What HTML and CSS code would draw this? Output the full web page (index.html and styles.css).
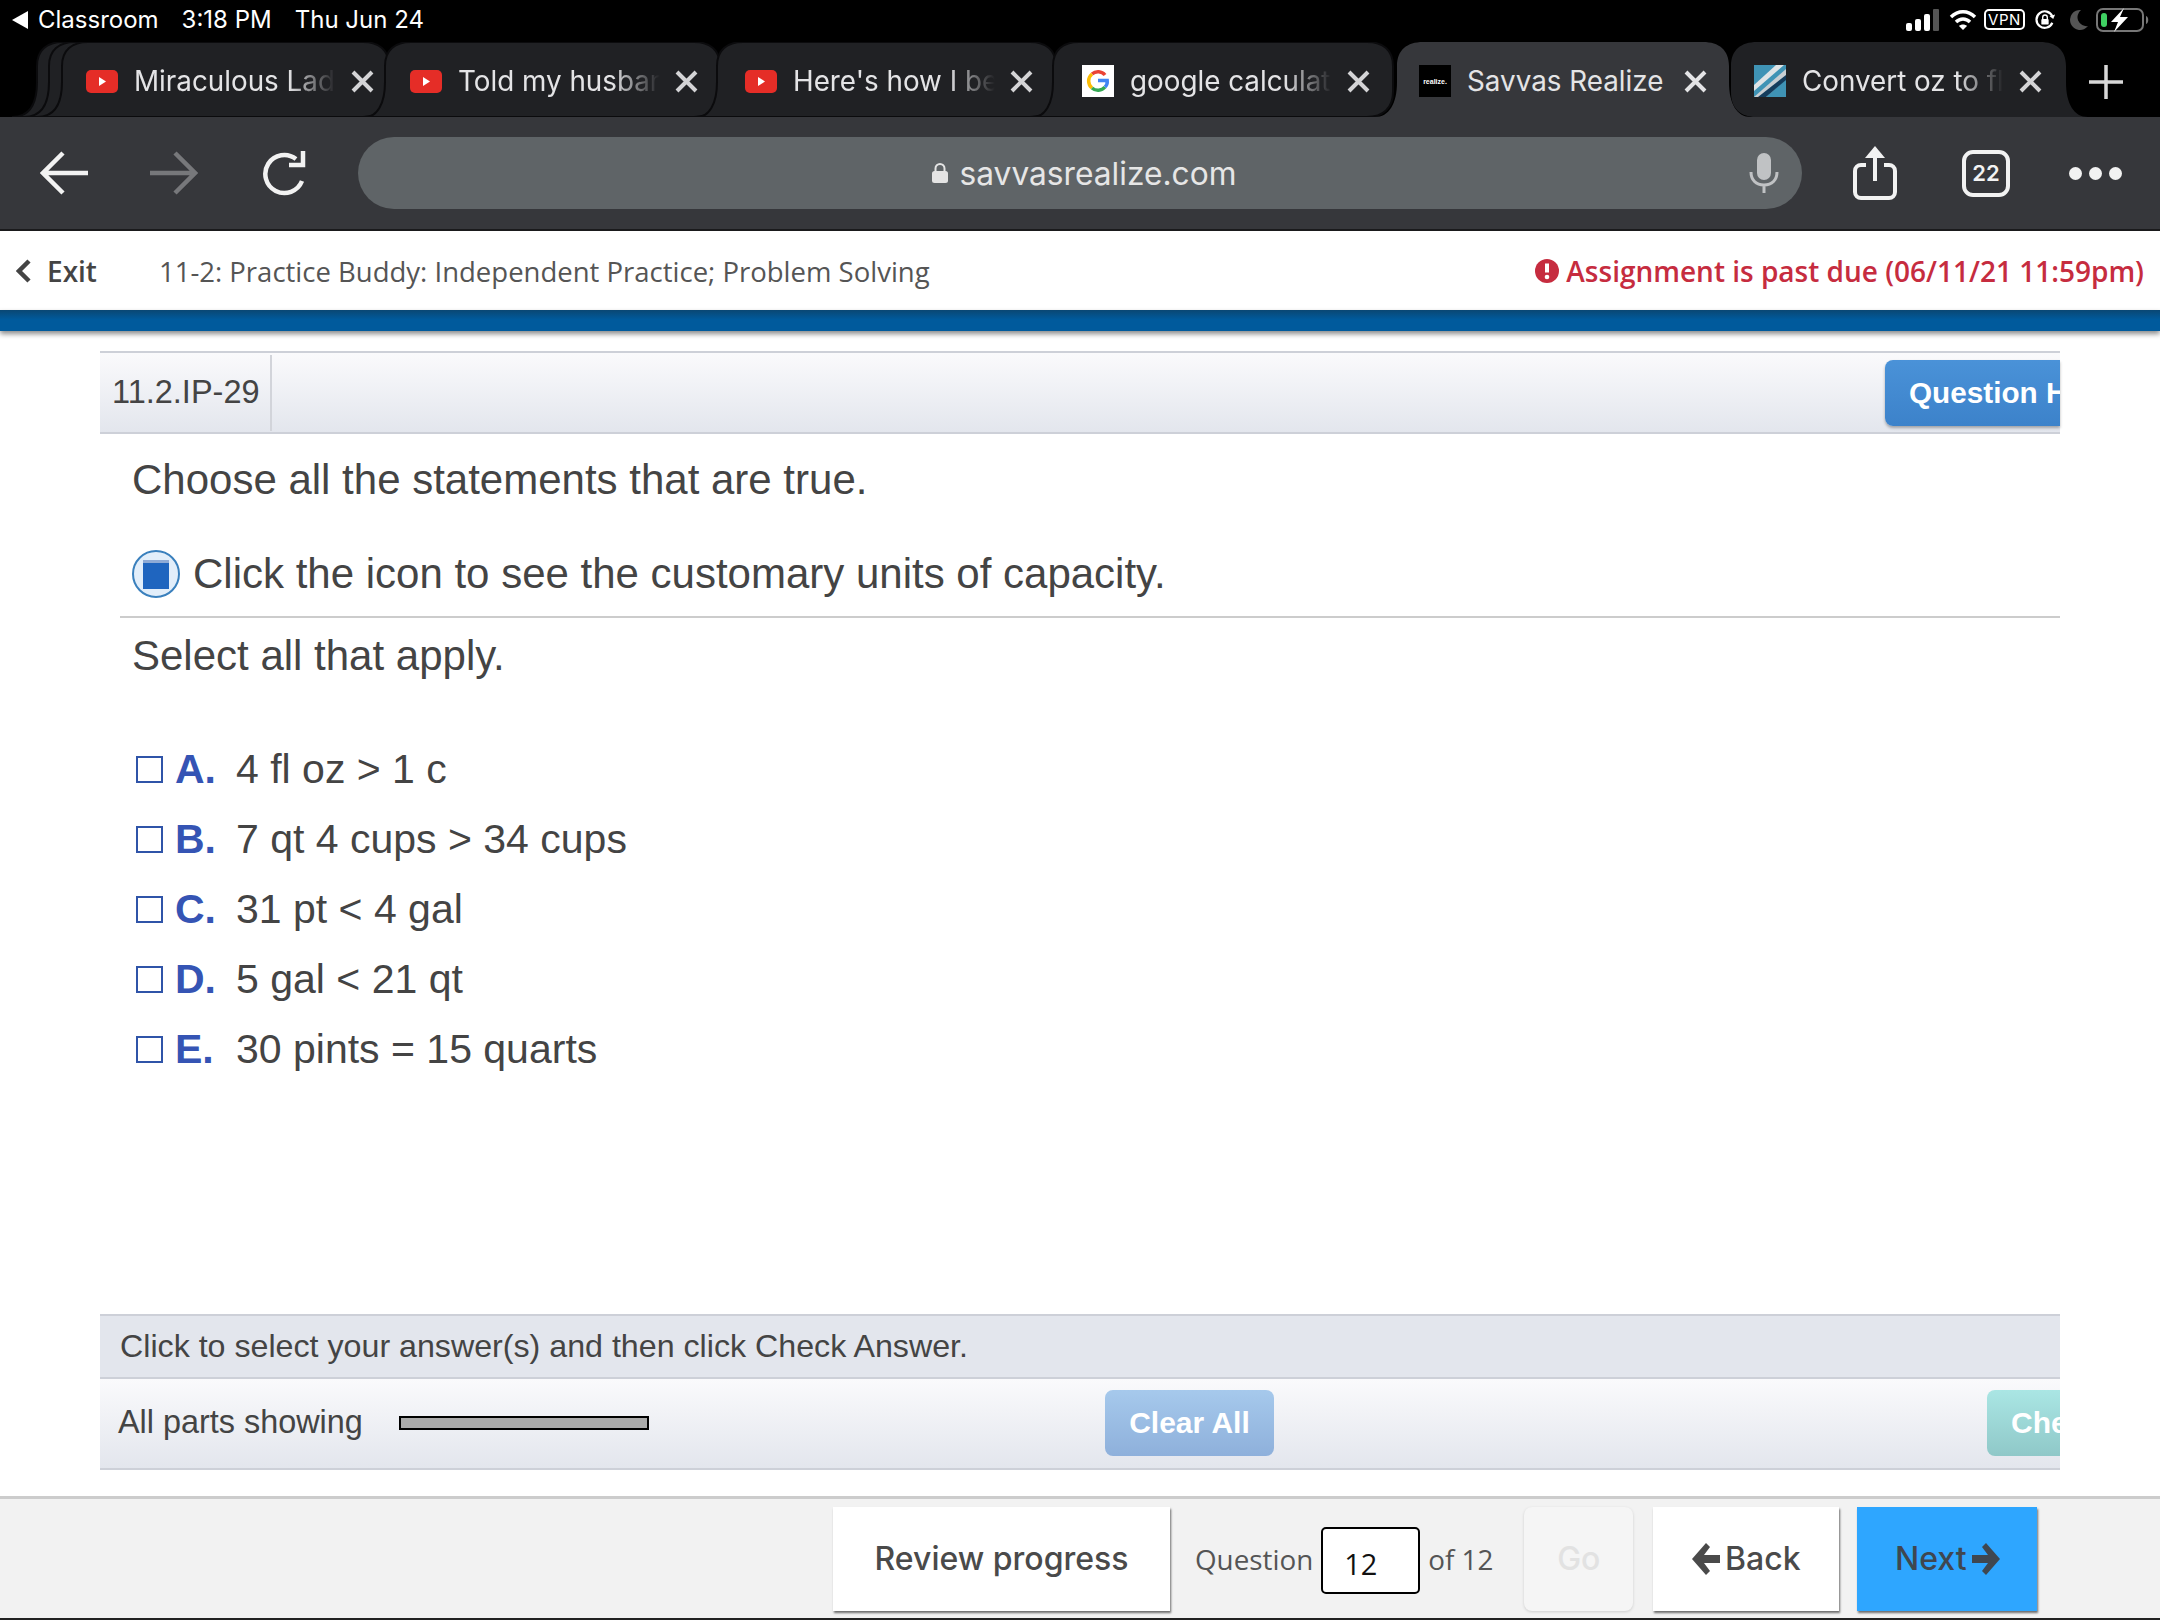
FILE: index.html
```html
<!DOCTYPE html>
<html lang="en">
<head>
<meta charset="utf-8">
<title>Savvas Realize</title>
<link rel="stylesheet" href="styles.css">
</head>
<body>
<div class="status">
  <span class="st-back"></span><span class="st-app">Classroom</span><span class="st-time">3:18 PM</span><span class="st-date">Thu Jun 24</span>
  <div class="st-icons">
    <svg width="33" height="22" viewBox="0 0 33 22"><g fill="#fff"><rect x="0" y="14" width="6" height="8" rx="2"/><rect x="9" y="10" width="6" height="12" rx="2"/><rect x="18" y="5" width="6" height="17" rx="2"/></g><rect x="27" y="0" width="6" height="22" rx="1" fill="#555"/></svg>
    <svg class="st-wifi" width="28" height="22" viewBox="0 0 28 22" fill="none" stroke="#fff" stroke-width="3.4"><path d="M2 8C9 1 19 1 26 8"/><path d="M7 13c4-4 10-4 14 0"/><path d="M14 21l-4-4c2-2 6-2 8 0z" fill="#fff" stroke="none"/></svg>
    <span class="st-vpn">VPN</span>
    <svg class="st-rot" width="22" height="22" viewBox="0 0 24 24" fill="none" stroke="#fff" stroke-width="2.400"><path d="M20 15a9 9 0 1 1 0-7"/><path d="M23 6l-2 5-4-3z" fill="#fff" stroke="none"/><rect x="8" y="11" width="8" height="6" rx="1" fill="#fff" stroke="none"/><path d="M9.500 11V9a2.500 2.500 0 0 1 5 0v2" stroke-width="1.500"/></svg>
    <svg class="st-moon" width="20" height="22" viewBox="0 0 20 22"><path d="M12 1A10 10 0 1 0 19 17 9 9 0 0 1 12 1z" fill="#555"/></svg>
    <svg width="54" height="24" viewBox="0 0 54 24" fill="none"><rect x="1" y="1" width="46" height="22" rx="6" stroke="#777" stroke-width="2"/><rect x="5" y="5" width="6" height="14" rx="3" fill="#3fd062"/><path d="M50 8c3 1 3 7 0 8z" fill="#777"/><path d="M28 0L15 14h7l-4 10 14-15h-8z" fill="#fff"/></svg>
  </div>
</div>

<div class="tabstrip">
  <svg class="tab-art" width="2160" height="75" viewBox="0 0 2160 75">
    <g fill="#202124" stroke="#0b0b0d" stroke-width="2">
      <path d="M12 75C29 75 37 62 37 40V24C37 8 47 0 63 0H200V75Z"/>
      <path d="M24 75C41 75 49 62 49 40V24C49 8 59 0 75 0H200V75Z"/>
      <path d="M37 75C54 75 62 62 62 40V24C62 8 72 0 88 0H363C379 0 389 8 389 24V50C389 66 379 75 363 75Z"/>
      <path d="M365 75C377 75 385 62 385 40V24C385 8 395 0 411 0H694C710 0 720 8 720 24V50C720 66 710 75 694 75Z"/>
      <path d="M697 75C709 75 717 62 717 40V24C717 8 727 0 743 0H1030C1046 0 1056 8 1056 24V50C1056 66 1046 75 1030 75Z"/>
      <path d="M1033 75C1045 75 1053 62 1053 40V24C1053 8 1063 0 1079 0H1367C1383 0 1393 8 1393 24V50C1393 66 1383 75 1367 75Z"/>
    </g>
    <path d="M1375 75C1389 75 1397 62 1397 40V24C1397 8 1407 0 1423 0H1703C1719 0 1729 8 1729 24V40C1729 62 1737 75 1751 75Z" fill="#36373b"/>
    <path d="M1756 75C1740 75 1731 66 1731 50V24C1731 8 1741 0 1757 0H2040C2056 0 2066 8 2066 24V40C2066 62 2074 75 2088 75Z" fill="#202124"/>
  </svg>
  <div class="tab tab-a">
    <svg class="fav" width="32" height="23" viewBox="0 0 32 23"><rect width="32" height="23" rx="5" fill="#e52d27"/><path d="M13 7l7 4.500-7 4.500z" fill="#fff"/></svg>
    <span class="tab-title tab-title-fade">Miraculous Ladybug</span>
    <svg class="tab-x" width="23" height="23" viewBox="0 0 23 23"><path d="M2 2L21 21M21 2L2 21" stroke="#d4d4d6" stroke-width="4"/></svg>
  </div>
  <div class="tab tab-b">
    <svg class="fav" width="32" height="23" viewBox="0 0 32 23"><rect width="32" height="23" rx="5" fill="#e52d27"/><path d="M13 7l7 4.500-7 4.500z" fill="#fff"/></svg>
    <span class="tab-title tab-title-fade">Told my husband</span>
    <svg class="tab-x" width="23" height="23" viewBox="0 0 23 23"><path d="M2 2L21 21M21 2L2 21" stroke="#d4d4d6" stroke-width="4"/></svg>
  </div>
  <div class="tab tab-c">
    <svg class="fav" width="32" height="23" viewBox="0 0 32 23"><rect width="32" height="23" rx="5" fill="#e52d27"/><path d="M13 7l7 4.500-7 4.500z" fill="#fff"/></svg>
    <span class="tab-title tab-title-fade">Here's how I became</span>
    <svg class="tab-x" width="23" height="23" viewBox="0 0 23 23"><path d="M2 2L21 21M21 2L2 21" stroke="#d4d4d6" stroke-width="4"/></svg>
  </div>
  <div class="tab tab-d">
    <svg class="fav" width="32" height="32" viewBox="0 0 32 32"><rect width="32" height="32" fill="#fff"/><path d="M23 10a9 9 0 0 0-13-1" fill="none" stroke="#ea4335" stroke-width="3.500"/><path d="M10 9a9 9 0 0 0 0 14" fill="none" stroke="#fbbc05" stroke-width="3.500"/><path d="M10 23a9 9 0 0 0 13-1" fill="none" stroke="#34a853" stroke-width="3.500"/><path d="M23 22c2-2 2.500-4 2.200-6.500H16" fill="none" stroke="#4285f4" stroke-width="3.500"/></svg>
    <span class="tab-title tab-title-fade">google calculator</span>
    <svg class="tab-x" width="23" height="23" viewBox="0 0 23 23"><path d="M2 2L21 21M21 2L2 21" stroke="#d4d4d6" stroke-width="4"/></svg>
  </div>
  <div class="tab tab-e">
    <span class="fav-black">realize.</span>
    <span class="tab-title">Savvas Realize</span>
    <svg class="tab-x" width="23" height="23" viewBox="0 0 23 23"><path d="M2 2L21 21M21 2L2 21" stroke="#e4e4e6" stroke-width="4"/></svg>
  </div>
  <div class="tab tab-f">
    <svg class="fav" width="32" height="32" viewBox="0 0 32 32"><rect width="32" height="32" fill="#3f93b5"/><path d="M0 32L32 4V14L12 32Z" fill="#c8ced2"/><path d="M4 32L32 10V15L12 32Z" fill="#143c5c"/><path d="M0 20L22 0H30L0 26Z" fill="#dfe4e6"/></svg>
    <span class="tab-title tab-title-fade">Convert oz to fl oz</span>
    <svg class="tab-x" width="23" height="23" viewBox="0 0 23 23"><path d="M2 2L21 21M21 2L2 21" stroke="#d4d4d6" stroke-width="4"/></svg>
  </div>
  <svg class="tab-plus" width="34" height="34" viewBox="0 0 34 34"><path d="M17 0V34M0 17H34" stroke="#d8d8d8" stroke-width="3.500"/></svg>
</div>

<div class="toolbar">
  <svg class="tb-back" width="48" height="44" viewBox="0 0 48 44" fill="none" stroke="#f2f2f2" stroke-width="4.500"><path d="M23 2L3 22l20 20M3 22H48"/></svg>
  <svg class="tb-fwd" width="48" height="44" viewBox="0 0 48 44" fill="none" stroke="#77787b" stroke-width="4.500"><path d="M25 2l20 20-20 20M45 22H0"/></svg>
  <svg class="tb-reload" width="46" height="46" viewBox="0 0 46 46" fill="none" stroke="#f2f2f2" stroke-width="4.500"><path d="M40 31A19 19 0 1 1 34 9"/><path d="M41 1V15H27" stroke-width="4.500"/></svg>
  <div class="urlbar">
    <div class="url-center">
      <svg width="16" height="20" viewBox="0 0 16 20"><rect x="0" y="8" width="16" height="12" rx="2.500" fill="#e4e4e4"/><path d="M3.500 9V5.500a4.500 4.500 0 0 1 9 0V9" fill="none" stroke="#e4e4e4" stroke-width="2"/></svg>
      <span class="url-text">savvasrealize.com</span>
    </div>
    <svg class="url-mic" width="30" height="40" viewBox="0 0 30 40" fill="none"><rect x="8" y="0" width="14" height="27" rx="7" fill="#c0c2c4"/><path d="M2 19c0 8 5 13 13 13s13-5 13-13M15 32v8" stroke="#c0c2c4" stroke-width="3"/></svg>
  </div>
  <svg class="tb-share" width="44" height="54" viewBox="0 0 44 54" fill="none" stroke="#f2f2f2" stroke-width="4"><path d="M13 19H8a6 6 0 0 0-6 6v21a6 6 0 0 0 6 6h28a6 6 0 0 0 6-6V25a6 6 0 0 0-6-6h-5"/><path d="M22 35V5"/><path d="M22 0l10 12H12z" fill="#f2f2f2" stroke="none"/></svg>
  <span class="tb-count">22</span>
  <div class="tb-dots"><i></i><i></i><i></i></div>
</div>

<header class="assign">
  <svg class="assign-chev" width="16" height="24" viewBox="0 0 16 24" fill="none" stroke="#444" stroke-width="4.500"><path d="M13 2L3 12l10 10"/></svg>
  <span class="assign-exit">Exit</span>
  <span class="assign-title">11-2: Practice Buddy: Independent Practice; Problem Solving</span>
  <div class="assign-due">
    <svg width="24" height="24" viewBox="0 0 24 24"><circle cx="12" cy="12" r="12" fill="#c62c3f"/><path d="M12 4.500v9" stroke="#fff" stroke-width="4"/><circle cx="12" cy="18" r="2.300" fill="#fff"/></svg>
    <span>Assignment is past due (06/11/21 11:59pm)</span>
  </div>
</header>
<div class="bluebar"></div>

<main class="work">
  <div class="q-head">
    <div class="q-num">11.2.IP-29</div>
    <button class="q-help">Question Help</button>
  </div>
  <p class="q-lead">Choose all the statements that are true.</p>
  <div class="q-info">
    <span class="q-icon"><i></i></span>
    <span>Click the icon to see the customary units of capacity.</span>
  </div>
  <p class="q-select">Select all that apply.</p>
  <ul class="choices">
    <li class="choice"><span class="box"></span><b>A.</b><span>4 fl oz &gt; 1 c</span></li>
    <li class="choice"><span class="box"></span><b>B.</b><span>7 qt 4 cups &gt; 34 cups</span></li>
    <li class="choice"><span class="box"></span><b>C.</b><span>31 pt &lt; 4 gal</span></li>
    <li class="choice"><span class="box"></span><b>D.</b><span>5 gal &lt; 21 qt</span></li>
    <li class="choice"><span class="box"></span><b>E.</b><span>30 pints = 15 quarts</span></li>
  </ul>
  <div class="hint">Click to select your answer(s) and then click Check Answer.</div>
  <div class="parts">
    <span class="parts-label">All parts showing</span>
    <span class="parts-bar"></span>
    <button class="btn-clear">Clear All</button>
    <button class="btn-check">Check Answer</button>
  </div>
</main>

<footer class="foot">
  <button class="f-btn f-review">Review progress</button>
  <span class="f-q">Question</span>
  <span class="f-input">12</span>
  <span class="f-of">of 12</span>
  <button class="f-btn f-go">Go</button>
  <button class="f-btn f-back"><svg width="28" height="32" viewBox="0 0 28 32"><path d="M14 0l4 4-6 8h16v8H12l6 8-4 4L0 16z" fill="#4a4a4a"/></svg>Back</button>
  <button class="f-btn f-next">Next<svg width="28" height="32" viewBox="0 0 28 32"><path d="M14 0l-4 4 6 8H0v8h16l-6 8 4 4 14-16z" fill="#3f4750"/></svg></button>
</footer>
</body>
</html>
```

FILE: styles.css
```css
* { box-sizing: border-box; }
html, body { margin: 0; padding: 0; }
body {
  width: 2160px;
  height: 1620px;
  overflow: hidden;
  display: flex;
  flex-direction: column;
  background: #fff;
  font-family: "Liberation Sans", Arial, sans-serif;
  color: #444;
}
button { font: inherit; border: 0; padding: 0; }

/* status bar */
.status {
  height: 42px;
  background: #000;
  color: #fff;
  display: flex;
  align-items: center;
  padding: 0 0 3px 12px;
  font: 400 24px Inter, sans-serif;
}
.st-back { width: 0; height: 0; border: 9px solid transparent; border-right: 16px solid #fff; border-left: 0; margin-right: 10px; }
.st-app { margin-right: 23px; }
.st-time { margin-right: 23px; }
.st-icons { margin-left: auto; display: flex; align-items: center; gap: 7px; padding-right: 10px; }
.st-wifi { margin-left: 3px; }
.st-vpn { margin-right: 2px; }
.st-rot { margin-right: 2px; }
.st-moon { margin-left: 4px; }
.st-vpn { border: 2px solid #fff; border-radius: 5px; font-size: 15px; line-height: 17px; padding: 0 2px; letter-spacing: .6px; }

/* tabs */
.tabstrip { position: relative; height: 75px; background: #000; display: flex; }
.tab-art { position: absolute; left: 0; top: 0; }
.tab {
  position: relative;
  display: flex;
  align-items: center;
  width: 288px;
  height: 48px;
  margin-top: 15px;
  color: #e4e4e6;
  font: 400 27.8px Inter, sans-serif;
}
.tab-a { margin-left: 86px; }
.tab-b { margin-left: 36px; }
.tab-c { margin-left: 47px; }
.tab-d { margin-left: 49px; }
.tab-e { margin-left: 49px; }
.tab-f { margin-left: 47px; }
.fav { flex: none; }
.fav-black {
  width: 32px; height: 32px; flex: none; background: #000; color: #fff;
  font: 700 7px "Liberation Sans", sans-serif; display: flex; align-items: center; justify-content: center;
  overflow: hidden;
}
.tab-title { margin-left: 16px; width: 206px; flex: none; white-space: nowrap; overflow: hidden; }
.tab-title-fade { -webkit-mask-image: linear-gradient(90deg, #000 75%, transparent 98%); mask-image: linear-gradient(90deg, #000 75%, transparent 98%); }
.tab-x { margin-left: auto; flex: none; }
.tab-plus { position: absolute; left: 2089px; top: 23px; }

/* toolbar */
.toolbar {
  height: 114px;
  background: #36373b;
  border-bottom: 2px solid #1a1a1c;
  display: flex;
  align-items: center;
  padding-left: 40px;
}
.tb-back, .tb-fwd, .tb-reload { flex: none; }
.tb-fwd { margin-left: 62px; }
.tb-reload { margin-left: 64px; }
.urlbar {
  margin-left: 50px;
  width: 1444px;
  height: 72px;
  border-radius: 36px;
  background: #5f6467;
  position: relative;
  display: flex;
  align-items: center;
  justify-content: center;
  padding-left: 8px;
}
.url-center { display: flex; align-items: center; gap: 12px; color: #e6e6e6; font: 400 31.7px Inter, sans-serif; }
.url-mic { position: absolute; left: 1391px; top: 16px; }
.tb-share { margin-left: 51px; flex: none; }
.tb-count {
  margin-left: 65px; width: 48px; height: 47px; flex: none;
  border: 4px solid #f2f2f2; border-radius: 11px;
  color: #f2f2f2; font: 600 22px Inter, sans-serif;
  display: flex; align-items: center; justify-content: center;
}
.tb-dots { margin-left: 59px; display: flex; gap: 7px; }
.tb-dots i { width: 13px; height: 13px; border-radius: 50%; background: #f2f2f2; }

/* assignment header */
.assign {
  height: 79px;
  display: flex;
  align-items: center;
  padding: 1px 0 0 16px;
  font-family: "Open Sans", sans-serif;
  font-size: 27.5px;
  color: #555;
}
.assign-exit { margin-left: 15px; font-weight: 600; color: #444; font-size: 28px; }
.assign-title { margin-left: 62px; }
.assign-due { margin-left: auto; padding-right: 16px; display: flex; align-items: center; gap: 7px; color: #c62c3f; font-weight: 600; font-size: 28px; }
.bluebar {
  height: 21px;
  background: linear-gradient(#0a4773, #005a9c 45%, #005a9c);
  box-shadow: 0 3px 5px rgba(0,0,0,.45);
}

/* work area */
.work { flex: 1; margin: 20px 100px 0; display: flex; flex-direction: column; }
.q-head {
  height: 83px;
  border-top: 2px solid #cdd0d8;
  border-bottom: 2px solid #cdd0d8;
  background: linear-gradient(#fafafc, #e3e6ed);
  display: flex;
  align-items: center;
  justify-content: space-between;
}
.q-num { width: 172px; height: 76px; border-right: 2px solid #d2d4da; padding-left: 12px; display: flex; align-items: center; font-size: 32.5px; color: #444; }
.q-help {
  width: 175px; height: 66px; border-radius: 8px 0 0 8px; overflow: hidden; white-space: nowrap; text-align: left; padding-left: 24px;
  background: linear-gradient(#4a92d8, #3c82ca); color: #fff; font-weight: 700; font-size: 29.7px;
  box-shadow: 0 2px 3px rgba(0,0,0,.3);
}
.q-lead { margin: 21px 0 0 32px; font-size: 42px; line-height: 50px; }
.q-info {
  margin: 44px 0 0 20px;
  padding: 0 0 17px 12px;
  border-bottom: 2px solid #ccc;
  display: flex;
  align-items: center;
  gap: 13px;
  font-size: 42px;
  line-height: 50px;
}
.q-icon { width: 48px; height: 48px; flex: none; border-radius: 50%; border: 2px solid #3a80bd; background: #e2eefa; display: flex; align-items: center; justify-content: center; }
.q-icon i { width: 26px; height: 29px; background: #1f65bf; border-top: 3px solid #8fabd6; }
.q-select { margin: 13px 0 0 32px; font-size: 42px; line-height: 50px; }
.choices { list-style: none; margin: 63px 0 0 36px; padding: 0; display: flex; flex-direction: column; gap: 20px; }
.choice { display: flex; align-items: center; height: 50px; font-size: 41px; }
.box { width: 27px; height: 27px; border: 2px solid #2f54a8; background: #fff; flex: none; }
.choice b { width: 61px; margin-left: 12px; color: #3554b4; flex: none; }
.hint {
  margin-top: auto;
  height: 65px;
  background: #e3e6ed;
  border-top: 2px solid #cdd0d8;
  border-bottom: 2px solid #cdd0d8;
  padding-left: 20px;
  display: flex;
  align-items: center;
  font-size: 32.2px;
}
.parts {
  height: 91px;
  margin-bottom: 26px;
  border-bottom: 2px solid #cdd0d8;
  background: linear-gradient(#fafafc, #e3e6ed);
  display: flex;
  align-items: center;
  padding: 0 0 2px 18px;
  font-size: 32.4px;
}
.parts-label { width: 281px; }
.parts-bar { width: 250px; height: 14px; background: #aaa; border: 2px solid #000; }
.btn-clear, .btn-check { height: 66px; border-radius: 8px; color: #fff; font-weight: 700; font-size: 30px; overflow: hidden; white-space: nowrap; }
.btn-clear { margin-left: 456px; width: 169px; background: linear-gradient(#a6c9ec, #8eb0db); }
.btn-check { margin-left: auto; width: 73px; text-align: left; padding-left: 24px; border-radius: 8px 0 0 8px; background: linear-gradient(#aae6e4, #8fc8c8); }

/* footer */
.foot {
  height: 124px;
  background: #f2f2f2;
  border-top: 3px solid #ccc;
  border-bottom: 2px solid #222;
  display: flex;
  align-items: center;
  padding-left: 833px;
  font-family: "Open Sans", sans-serif;
  font-size: 27.8px;
  color: #555;
}
.f-btn {
  height: 104px;
  background: #fff;
  color: #4a4a4a;
  font-family: Inter, sans-serif;
  font-weight: 500;
  font-size: 32px;
  box-shadow: 1px 2px 2px rgba(0,0,0,.55);
  display: flex;
  align-items: center;
  justify-content: center;
  gap: 5px;
}
.f-review { width: 337px; }
.f-q { margin-left: 25px; }
.f-input {
  margin: 3px 0 0 8px; width: 99px; height: 67px; background: #fff; border: 2px solid #000; border-radius: 5px;
  display: flex; align-items: center; padding: 6px 0 0 21px; color: #111; font-size: 29px;
}
.f-of { margin-left: 8px; }
.f-go { margin-left: 31px; width: 109px; background: #f5f5f5; color: #e2e2e2; border-radius: 8px; box-shadow: 0 1px 3px rgba(0,0,0,.15); }
.f-back { margin-left: 20px; width: 186px; }
.f-next { margin-left: 18px; width: 180px; background: #2ea6ff; color: #3f4750; }
```
